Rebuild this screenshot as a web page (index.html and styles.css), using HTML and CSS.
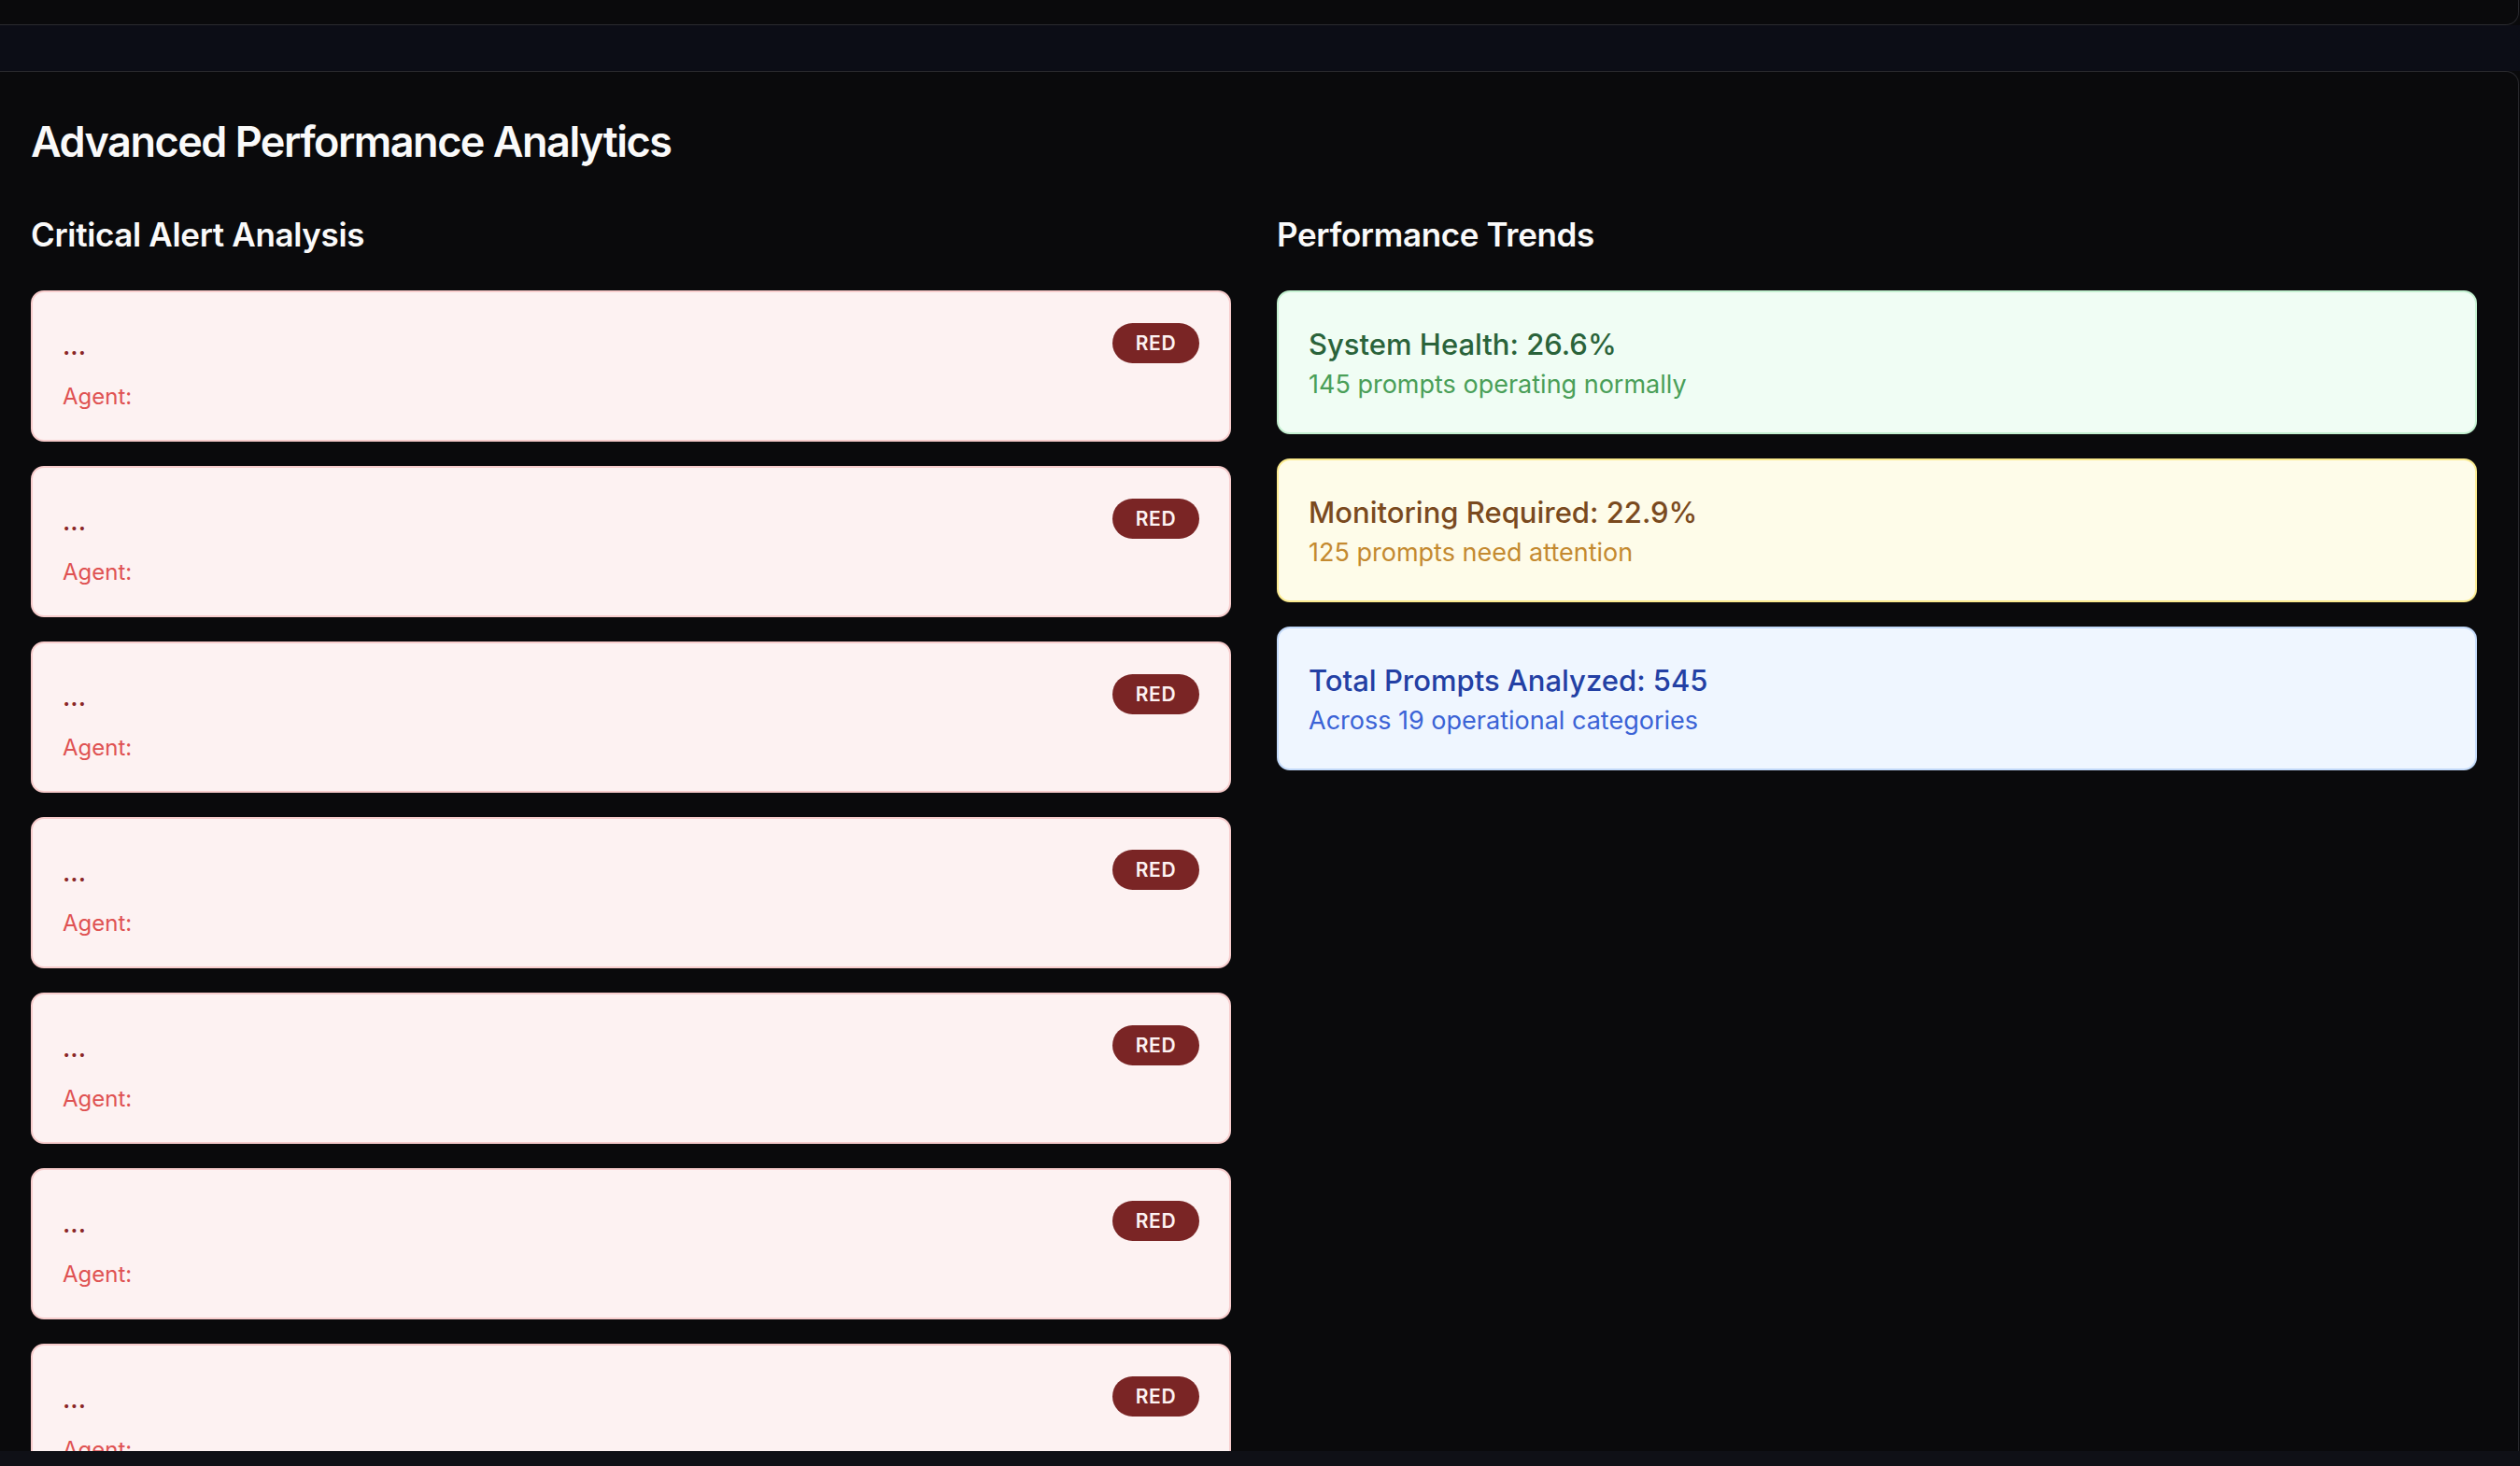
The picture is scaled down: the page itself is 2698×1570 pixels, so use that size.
FILE: index.html
```html
<!DOCTYPE html>
<html lang="en">
<head>
<meta charset="utf-8">
<title>Advanced Performance Analytics</title>
<link rel="stylesheet" href="styles.css">
</head>
<body>
<div class="topbar"></div>
<div class="band"></div>
<main class="panel">
  <h1 class="title">Advanced Performance Analytics</h1>
  <div class="grid">
    <section class="col">
      <h2 class="section-title">Critical Alert Analysis</h2>
      <div class="alerts">
        <div class="alert"><div class="alert-row"><div class="alert-name">...</div><span class="badge">RED</span></div><div class="agent">Agent:</div></div>
        <div class="alert"><div class="alert-row"><div class="alert-name">...</div><span class="badge">RED</span></div><div class="agent">Agent:</div></div>
        <div class="alert"><div class="alert-row"><div class="alert-name">...</div><span class="badge">RED</span></div><div class="agent">Agent:</div></div>
        <div class="alert"><div class="alert-row"><div class="alert-name">...</div><span class="badge">RED</span></div><div class="agent">Agent:</div></div>
        <div class="alert"><div class="alert-row"><div class="alert-name">...</div><span class="badge">RED</span></div><div class="agent">Agent:</div></div>
        <div class="alert"><div class="alert-row"><div class="alert-name">...</div><span class="badge">RED</span></div><div class="agent">Agent:</div></div>
        <div class="alert"><div class="alert-row"><div class="alert-name">...</div><span class="badge">RED</span></div><div class="agent">Agent:</div></div>
      </div>
    </section>
    <section class="col">
      <h2 class="section-title">Performance Trends</h2>
      <div class="trends">
        <div class="trend trend-green">
          <div class="trend-title">System Health: 26.6%</div>
          <div class="trend-sub">145 prompts operating normally</div>
        </div>
        <div class="trend trend-yellow">
          <div class="trend-title">Monitoring Required: 22.9%</div>
          <div class="trend-sub">125 prompts need attention</div>
        </div>
        <div class="trend trend-blue">
          <div class="trend-title">Total Prompts Analyzed: 545</div>
          <div class="trend-sub">Across 19 operational categories</div>
        </div>
      </div>
    </section>
  </div>
</main>
<div class="bottom-band"></div>
</body>
</html>
```
FILE: styles.css
```css
* { box-sizing: border-box; }

html, body {
  margin: 0;
  padding: 0;
  background: #0a0a0c;
  height: 1570px;
  overflow: hidden;
  font-family: Inter, "Noto Sans", "Liberation Sans", sans-serif;
}

.topbar {
  height: 27px;
  margin-left: -20px;
  margin-right: 1px;
  background: #0a0a0c;
  border-bottom: 1px solid #2a2a2f;
  border-right: 1px solid #2a2a2f;
  border-bottom-right-radius: 14px;
}

.band {
  height: 49px;
  background: #0c0d16;
}

.panel {
  height: 1478px;
  margin-left: -20px;
  margin-right: 1px;
  background: #0a0a0c;
  border-top: 1px solid #2a2a2f;
  border-right: 1px solid #2a2a2f;
  border-top-right-radius: 14px;
  padding: 45px 0 0 53px;
  overflow: hidden;
}

.title {
  margin: 0;
  font-size: 45px;
  line-height: 60px;
  font-weight: 600;
  letter-spacing: -1.5px;
  color: #fafafa;
}

.grid {
  margin-top: 45px;
  display: grid;
  grid-template-columns: 1285px 1285px;
  column-gap: 49px;
}

.section-title {
  margin: 0;
  font-size: 35px;
  line-height: 48px;
  font-weight: 600;
  letter-spacing: -0.35px;
  color: #fafafa;
}

.alerts, .trends {
  margin-top: 36px;
  display: flex;
  flex-direction: column;
  gap: 26px;
}

.alert {
  background: #fdf2f2;
  border: 2px solid #f7cccc;
  border-radius: 14px;
  padding: 34px 32px 32px 32px;
}

.alert-row {
  display: flex;
  justify-content: space-between;
  align-items: flex-start;
  height: 46px;
}

.alert-name {
  font-size: 27.5px;
  line-height: 46px;
  font-weight: 500;
  color: #8a2626;
}

.badge {
  display: inline-flex;
  align-items: center;
  justify-content: center;
  width: 93px;
  height: 43px;
  border-radius: 22px;
  background: #7a2525;
  color: #fdf2f2;
  font-size: 21px;
  font-weight: 600;
  letter-spacing: 0.6px;
  margin-top: -1px;
}

.agent {
  margin-top: 18px;
  font-size: 24px;
  line-height: 28px;
  color: #df5252;
}

.trend {
  border: 2px solid;
  border-radius: 14px;
  padding: 34px 32px;
}

.trend-title {
  font-size: 31px;
  line-height: 44px;
  font-weight: 500;
}

.trend-sub {
  margin-top: 3px;
  font-size: 27px;
  line-height: 35px;
}

.trend-green { background: #f0fdf4; border-color: #c3f0d0; }
.trend-green .trend-title { color: #2a633a; }
.trend-green .trend-sub { color: #4a9f58; }

.trend-yellow { background: #fefce9; border-color: #fbeb8f; }
.trend-yellow .trend-title { color: #7a4a1e; }
.trend-yellow .trend-sub { color: #c48a30; }

.trend-blue { background: #eff6ff; border-color: #c2d9f9; }
.trend-blue .trend-title { color: #2340a4; }
.trend-blue .trend-sub { color: #3b63d6; }

.bottom-band {
  height: 16px;
  background: #0f1016;
}
```
